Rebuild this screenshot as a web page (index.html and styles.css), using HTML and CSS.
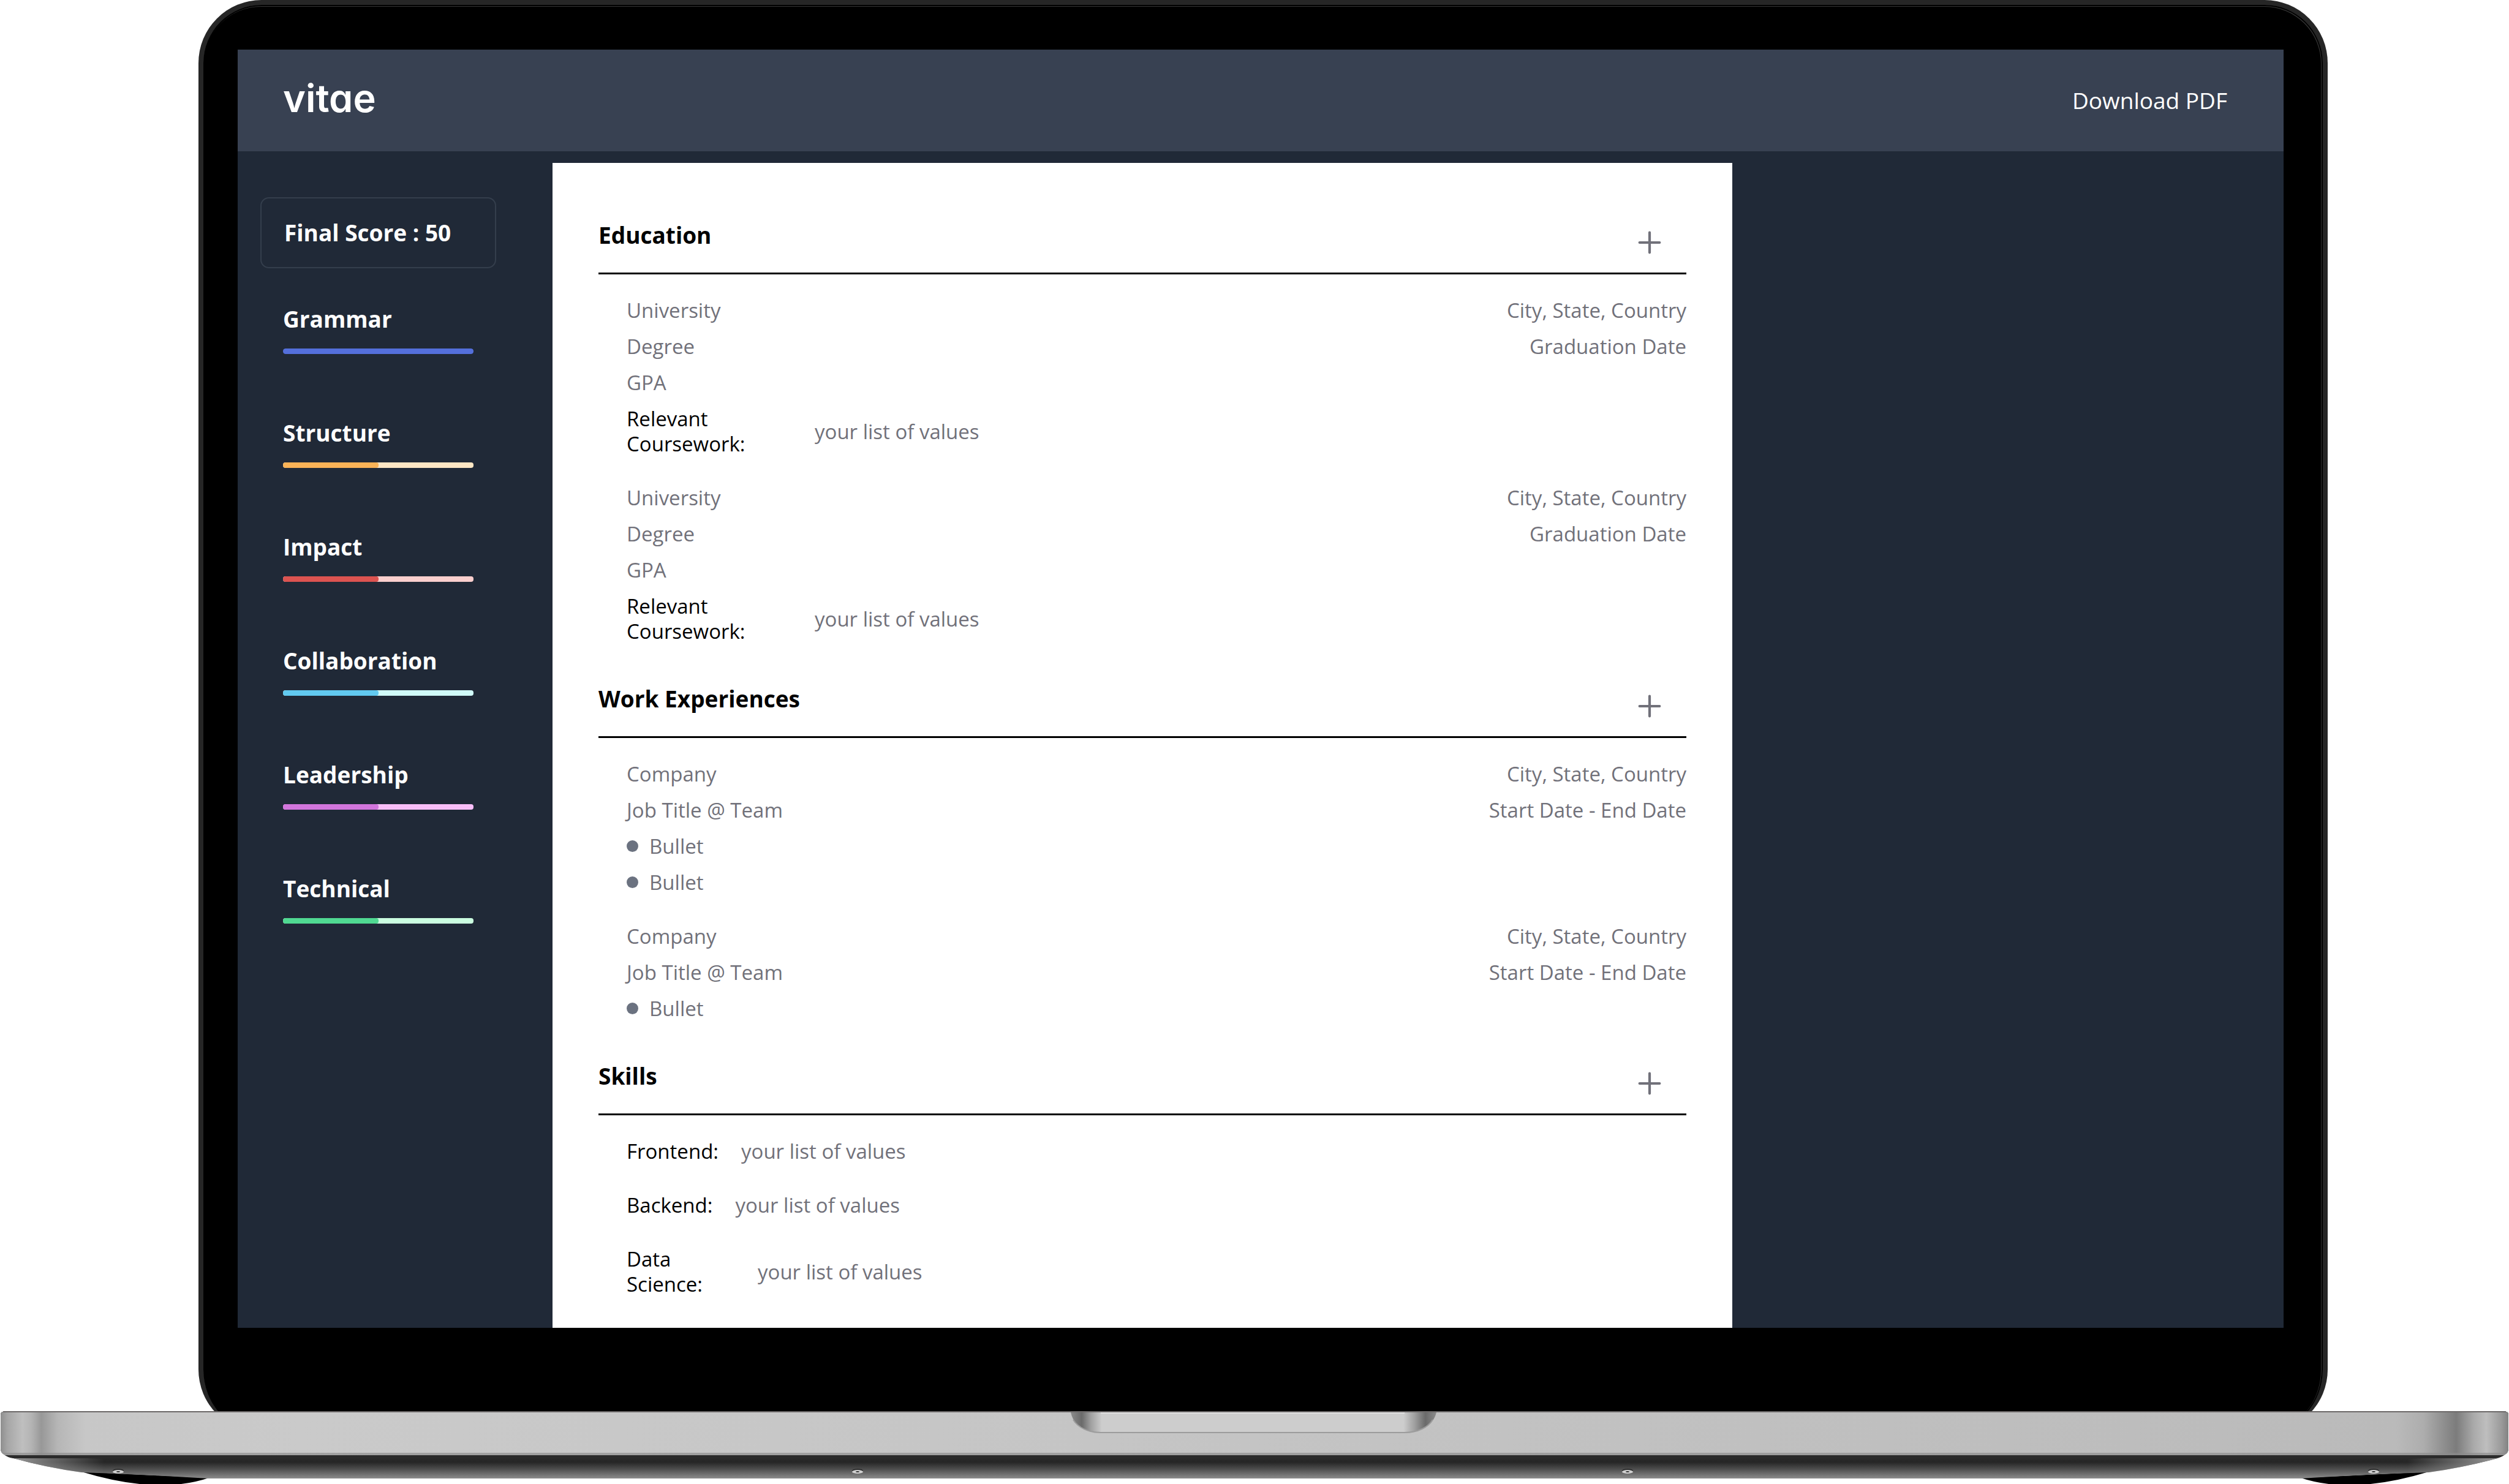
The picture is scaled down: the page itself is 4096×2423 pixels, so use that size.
FILE: index.html
```html
<!DOCTYPE html>
<html lang="en">
<head>
<meta charset="utf-8">
<meta name="viewport" content="width=device-width, initial-scale=1">
<title>vitae</title>
<link rel="stylesheet" href="styles.css">
</head>
<body>
<div class="laptop">
  <div class="lid">
    <div class="screen">
      <header class="topbar">
        <a class="brand" href="#">vitae</a>
        <button class="download" type="button">Download PDF</button>
      </header>
      <div class="workspace">
        <aside class="sidebar">
          <div class="total">Final Score : 50</div>
          <ul class="scores">
            <li class="score grammar"><span>Grammar</span><div class="track"><div class="fill" style="width:100%"></div></div></li>
            <li class="score structure"><span>Structure</span><div class="track"><div class="fill" style="width:50%"></div></div></li>
            <li class="score impact"><span>Impact</span><div class="track"><div class="fill" style="width:50%"></div></div></li>
            <li class="score collaboration"><span>Collaboration</span><div class="track"><div class="fill" style="width:50%"></div></div></li>
            <li class="score leadership"><span>Leadership</span><div class="track"><div class="fill" style="width:50%"></div></div></li>
            <li class="score technical"><span>Technical</span><div class="track"><div class="fill" style="width:50%"></div></div></li>
          </ul>
        </aside>
        <main class="paper">
          <section class="section">
            <div class="section-head">
              <h2>Education</h2>
              <button class="add" type="button" aria-label="Add education"><svg viewBox="0 0 24 24"><path d="M12 5v14M5 12h14"/></svg></button>
            </div>
            <div class="entries">
              <div class="entry">
                <div class="row"><span>University</span><span>City, State, Country</span></div>
                <div class="row"><span>Degree</span><span>Graduation Date</span></div>
                <div class="row"><span>GPA</span></div>
                <div class="pair"><span class="key key-wide">Relevant Coursework:</span><span>your list of values</span></div>
              </div>
              <div class="entry">
                <div class="row"><span>University</span><span>City, State, Country</span></div>
                <div class="row"><span>Degree</span><span>Graduation Date</span></div>
                <div class="row"><span>GPA</span></div>
                <div class="pair"><span class="key key-wide">Relevant Coursework:</span><span>your list of values</span></div>
              </div>
            </div>
          </section>
          <section class="section">
            <div class="section-head">
              <h2>Work Experiences</h2>
              <button class="add" type="button" aria-label="Add work experience"><svg viewBox="0 0 24 24"><path d="M12 5v14M5 12h14"/></svg></button>
            </div>
            <div class="entries">
              <div class="entry">
                <div class="row"><span>Company</span><span>City, State, Country</span></div>
                <div class="row"><span>Job Title @ Team</span><span>Start Date - End Date</span></div>
                <div class="bullet">Bullet</div>
                <div class="bullet">Bullet</div>
              </div>
              <div class="entry">
                <div class="row"><span>Company</span><span>City, State, Country</span></div>
                <div class="row"><span>Job Title @ Team</span><span>Start Date - End Date</span></div>
                <div class="bullet">Bullet</div>
              </div>
            </div>
          </section>
          <section class="section">
            <div class="section-head">
              <h2>Skills</h2>
              <button class="add" type="button" aria-label="Add skill"><svg viewBox="0 0 24 24"><path d="M12 5v14M5 12h14"/></svg></button>
            </div>
            <div class="entries">
              <div class="pair"><span class="key">Frontend:</span><span>your list of values</span></div>
              <div class="pair"><span class="key">Backend:</span><span>your list of values</span></div>
              <div class="pair"><span class="key key-narrow">Data Science:</span><span>your list of values</span></div>
            </div>
          </section>
        </main>
      </div>
    </div>
  </div>
  <svg class="base" viewBox="0 0 4096 119" preserveAspectRatio="none" aria-hidden="true">
    <defs>
      <linearGradient id="front" gradientUnits="userSpaceOnUse" x1="0" y1="0" x2="4096" y2="0">
        <stop offset="0" stop-color="#8c8c8c"/>
        <stop offset=".003" stop-color="#a6a6a6"/>
        <stop offset=".009" stop-color="#bfbfbf"/>
        <stop offset=".0125" stop-color="#b4b4b4"/>
        <stop offset=".0165" stop-color="#989898"/>
        <stop offset=".023" stop-color="#b6b6b6"/>
        <stop offset=".034" stop-color="#c7c7c7"/>
        <stop offset=".12" stop-color="#cacaca"/>
        <stop offset=".5" stop-color="#c4c4c4"/>
        <stop offset=".85" stop-color="#bdbdbd"/>
        <stop offset=".955" stop-color="#bababa"/>
        <stop offset=".966" stop-color="#adadad"/>
        <stop offset=".979" stop-color="#7c7c7c"/>
        <stop offset=".986" stop-color="#aaaaaa"/>
        <stop offset=".991" stop-color="#bebebe"/>
        <stop offset=".997" stop-color="#9a9a9a"/>
        <stop offset="1" stop-color="#808080"/>
      </linearGradient>
      <linearGradient id="under" gradientUnits="userSpaceOnUse" x1="0" y1="72" x2="0" y2="110">
        <stop offset="0" stop-color="#2d2d2d"/>
        <stop offset=".3" stop-color="#262626"/>
        <stop offset=".6" stop-color="#4e4e4e"/>
        <stop offset="1" stop-color="#8c8c8c"/>
      </linearGradient>
      <linearGradient id="glowLeft"><stop offset="0" stop-color="#a0a0a0"/><stop offset="1" stop-color="#a0a0a0" stop-opacity="0"/></linearGradient>
      <linearGradient id="glowRight"><stop offset="0" stop-color="#a0a0a0" stop-opacity="0"/><stop offset="1" stop-color="#a0a0a0"/></linearGradient>
      <linearGradient id="notch">
        <stop offset="0" stop-color="#8c8c8c"/>
        <stop offset=".03" stop-color="#6a6a6a"/>
        <stop offset=".055" stop-color="#a0a0a0"/>
        <stop offset=".085" stop-color="#cdcdcd"/>
        <stop offset=".91" stop-color="#cdcdcd"/>
        <stop offset=".94" stop-color="#a0a0a0"/>
        <stop offset=".97" stop-color="#6a6a6a"/>
        <stop offset="1" stop-color="#8c8c8c"/>
      </linearGradient>
    </defs>
    <path d="M133 99Q258 137 341 109Z"/>
    <path d="M3756 109Q3840 137 3965 99Z"/>
    <path d="M8 72L22 77Q75 92 133 100Q225 103 341 110H3756Q3870 103 3965 100Q4022 92 4077 77L4088 72Z" fill="url(#under)"/>
    <path d="M8 72L22 77Q75 92 133 100L170 102V78Z" fill="url(#glowLeft)"/>
    <path d="M4088 72L4077 77Q4022 92 3965 100L3930 102V78Z" fill="url(#glowRight)"/>
    <path d="M5 1H4091Q4095 1 4095 6V62Q4095 67 4090 70Q4084 76 4074 77H22Q12 76 6 70Q1 67 1 62V6Q1 1 5 1Z" fill="#2b2b2b"/>
    <path d="M5 1H4091Q4095 1 4095 6V62Q4095 69 4088 72H8Q1 69 1 62V6Q1 1 5 1Z" fill="url(#front)"/>
    <path d="M4 68H4092L4087 72H9Z" fill="#8c8c8c" opacity=".65"/>
    <path d="M5 1H4091" stroke="#6b6868" stroke-width="2"/>
    <path d="M1748 2H2345C2340 22 2322 35 2293 35H1797C1770 35 1752 22 1748 2Z" fill="url(#notch)"/>
    <path d="M1752 14C1760 27 1777 35 1797 35H2293C2315 35 2332 26 2339 14" fill="none" stroke="#9c9c9c" stroke-width="2"/>
    <path d="M1797 3H2293" stroke="#e2e2e2" stroke-width="2"/>
    <g class="sockets">
      <ellipse cx="193" cy="97" rx="9" ry="3"/><ellipse cx="1400" cy="97" rx="9" ry="3"/><ellipse cx="2657" cy="97" rx="9" ry="3"/><ellipse cx="3875" cy="97" rx="9" ry="3"/>
    </g>
    <g class="screws">
      <ellipse cx="193" cy="99" rx="9" ry="3"/><ellipse cx="1400" cy="99" rx="9" ry="3"/><ellipse cx="2657" cy="99" rx="9" ry="3"/><ellipse cx="3875" cy="99" rx="9" ry="3"/>
    </g>
    <g class="sockets">
      <ellipse cx="193" cy="99" rx="3" ry="1"/><ellipse cx="1400" cy="99" rx="3" ry="1"/><ellipse cx="2657" cy="99" rx="3" ry="1"/><ellipse cx="3875" cy="99" rx="3" ry="1"/>
    </g>
  </svg>
</div>
</body>
</html>
```
FILE: styles.css
```css
* { box-sizing: border-box; }

body {
  margin: 0;
  background: #fff;
  font-family: "Open Sans", "Noto Sans", sans-serif;
  font-size: 33px;
  line-height: 41px;
}

button {
  padding: 0;
  border: 0;
  background: none;
  font: inherit;
  cursor: pointer;
}

.laptop {
  display: flex;
  flex-direction: column;
  height: 100vh;
  overflow: hidden;
}

.lid {
  display: flex;
  flex: 1;
  min-height: 0;
  margin: 0 296px -35px 324px;
  padding: 73px 64px 171px 56px;
  border: 8px solid #262626;
  border-bottom: 0;
  border-radius: 103px;
  background: #000;
  box-shadow: inset 0 0 0 2px #000, inset -1px 1px 0 2px #343434;
}

.screen {
  display: flex;
  flex: 1;
  flex-direction: column;
  min-width: 0;
  overflow: hidden;
  background: #202937;
}

.topbar {
  display: flex;
  flex: none;
  align-items: center;
  justify-content: space-between;
  height: 166px;
  padding: 0 92px 0 74px;
  background: #384152;
  color: #fff;
}

.brand {
  padding-bottom: 8px;
  color: inherit;
  font: 600 63px/80px Inter, sans-serif;
  font-feature-settings: "cv11";
  text-decoration: none;
}

.download {
  color: inherit;
  font-size: 37px;
  line-height: 56px;
}

.workspace {
  display: flex;
  flex: 1;
  min-height: 0;
}

.sidebar {
  width: 514px;
  padding: 75px 92px 0 37px;
  color: #fff;
  font-size: 37px;
  font-weight: 700;
  line-height: 56px;
}

.total {
  padding: 28px 37px;
  border: 2px solid #343e4c;
  border-radius: 14px;
}

.scores {
  display: grid;
  gap: 101px;
  margin: 0;
  padding: 55px 37px 0;
  list-style: none;
}

.score {
  display: grid;
  gap: 20px;
}

.track {
  height: 9px;
  overflow: hidden;
  border-radius: 4px;
}

.fill {
  height: 100%;
  border-radius: 4px;
}

.grammar .fill { background: #546fdb; }
.structure .track { background: #fde6c4; }
.structure .fill { background: #fab357; }
.impact .track { background: #fbcfce; }
.impact .fill { background: #dc5350; }
.collaboration .track { background: #d0fbf8; }
.collaboration .fill { background: #62caf0; }
.leadership .track { background: #f8bef8; }
.leadership .fill { background: #d275dc; }
.technical .track { background: #cafde0; }
.technical .fill { background: #50d992; }

.paper {
  display: flex;
  flex-direction: column;
  gap: 46px;
  width: 1926px;
  margin-top: 19px;
  padding: 74px 75px 0;
  background: #fff;
  color: #71717a;
}

.section-head {
  display: flex;
  align-items: flex-start;
  justify-content: space-between;
  padding: 16px 32px 21px 0;
  border-bottom: 3px solid #000;
}

.section-head h2 {
  margin: 0;
  color: #000;
  font-size: 37px;
  line-height: 56px;
}

.add { padding-top: 12px; }

.add svg {
  display: block;
  width: 56px;
  height: 56px;
  fill: none;
  stroke: #71717a;
  stroke-width: 1.8;
  stroke-linecap: round;
}

.entries {
  display: grid;
  gap: 47px;
  padding: 38px 0 0 46px;
}

.entry {
  display: grid;
  gap: 18px;
}

.row {
  display: flex;
  justify-content: space-between;
}

.pair {
  display: flex;
  align-items: center;
  gap: 37px;
}

.key { color: #000; }
.key-wide { width: 270px; }
.key-narrow { width: 177px; }

.bullet {
  display: flex;
  align-items: center;
  gap: 18px;
}

.bullet::before {
  width: 19px;
  height: 19px;
  border-radius: 50%;
  background: #6b7280;
  content: "";
}

.base {
  position: relative;
  display: block;
  flex: none;
  width: 100%;
  height: 119px;
}

.screws { fill: #d0d0d0; }
.sockets { fill: #2e2e2e; }
```
